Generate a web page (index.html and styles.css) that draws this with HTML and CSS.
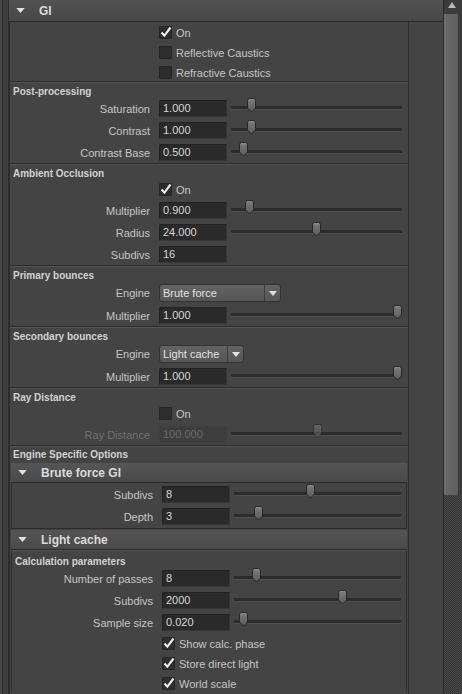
FILE: index.html
```html
<!DOCTYPE html>
<html>
<head>
<meta charset="utf-8">
<title>GI</title>
<link rel="stylesheet" href="styles.css">
</head>
<body>
<svg class="defs" width="0" height="0" aria-hidden="true">
  <defs>
    <linearGradient id="hg" x1="0" y1="0" x2="0" y2="1">
      <stop offset="0" stop-color="#7c7c7c"/>
      <stop offset="1" stop-color="#5c5c5c"/>
    </linearGradient>
    <symbol id="hdl" viewBox="0 0 11 15">
      <path d="M1.5 2.5 Q1.5 0.5 3.5 0.5 H7.5 Q9.5 0.5 9.5 2.5 V10 L5.5 14 L1.5 10 Z" fill="url(#hg)" stroke="#262626"/>
      <path d="M3 1.7 H8" stroke="#949494" stroke-width="0.8"/>
    </symbol>
    <symbol id="tick" viewBox="0 0 14 14">
      <path d="M2.5 7.5 L5.4 10.6 L11.5 2.5" fill="none" stroke="#ededed" stroke-width="2.1"/>
    </symbol>
    <symbol id="down" viewBox="0 0 10 6">
      <path d="M0 0 H10 L5 6 Z" fill="#e2e2e2"/>
    </symbol>
    <symbol id="up" viewBox="0 0 8 6">
      <path d="M0 6 H8 L4 0 Z" fill="#b8b8b8"/>
    </symbol>
  </defs>
</svg>

<div class="app">
  <div class="gutter"></div>

  <div class="main">
    <div class="hdr"><svg class="tri"><use href="#down"/></svg><span>GI</span></div>

    <div class="frame">
      <!-- On / caustics -->
      <div class="sec first">
        <div class="rows">
          <div class="crow"><span class="cb"><svg><use href="#tick"/></svg></span><span>On</span></div>
          <div class="crow"><span class="cb"></span><span>Reflective Caustics</span></div>
          <div class="crow"><span class="cb"></span><span>Refractive Caustics</span></div>
        </div>
      </div>

      <!-- Post-processing -->
      <div class="sec">
        <div class="ttl">Post-processing</div>
        <div class="rows">
          <div class="row"><span class="lbl">Saturation</span><span class="fld">1.000</span><span class="sld"><svg class="hd" style="left:15px"><use href="#hdl"/></svg></span></div>
          <div class="row"><span class="lbl">Contrast</span><span class="fld">1.000</span><span class="sld"><svg class="hd" style="left:15px"><use href="#hdl"/></svg></span></div>
          <div class="row"><span class="lbl">Contrast Base</span><span class="fld">0.500</span><span class="sld"><svg class="hd" style="left:7px"><use href="#hdl"/></svg></span></div>
        </div>
      </div>

      <!-- Ambient Occlusion -->
      <div class="sec">
        <div class="ttl">Ambient Occlusion</div>
        <div class="rows">
          <div class="crow"><span class="cb"><svg><use href="#tick"/></svg></span><span>On</span></div>
          <div class="row"><span class="lbl">Multiplier</span><span class="fld">0.900</span><span class="sld"><svg class="hd" style="left:13px"><use href="#hdl"/></svg></span></div>
          <div class="row"><span class="lbl">Radius</span><span class="fld">24.000</span><span class="sld"><svg class="hd" style="left:80px"><use href="#hdl"/></svg></span></div>
          <div class="row"><span class="lbl">Subdivs</span><span class="fld">16</span></div>
        </div>
      </div>

      <!-- Primary bounces -->
      <div class="sec">
        <div class="ttl">Primary bounces</div>
        <div class="rows">
          <div class="row dd"><span class="lbl">Engine</span><span class="ddbox wide"><span class="t">Brute force</span><span class="a"><svg><use href="#down"/></svg></span></span></div>
          <div class="row"><span class="lbl">Multiplier</span><span class="fld">1.000</span><span class="sld"><svg class="hd" style="left:161px"><use href="#hdl"/></svg></span></div>
        </div>
      </div>

      <!-- Secondary bounces -->
      <div class="sec">
        <div class="ttl">Secondary bounces</div>
        <div class="rows">
          <div class="row dd"><span class="lbl">Engine</span><span class="ddbox narrow"><span class="t">Light cache</span><span class="a"><svg><use href="#down"/></svg></span></span></div>
          <div class="row"><span class="lbl">Multiplier</span><span class="fld">1.000</span><span class="sld"><svg class="hd" style="left:161px"><use href="#hdl"/></svg></span></div>
        </div>
      </div>

      <!-- Ray Distance -->
      <div class="sec">
        <div class="ttl">Ray Distance</div>
        <div class="rows">
          <div class="crow"><span class="cb"></span><span>On</span></div>
          <div class="row dis"><span class="lbl">Ray Distance</span><span class="fld">100.000</span><span class="sld"><svg class="hd" style="left:81px"><use href="#hdl"/></svg></span></div>
        </div>
      </div>

      <!-- Engine Specific Options -->
      <div class="sec last">
        <div class="ttl short">Engine Specific Options</div>

        <div class="subhdr"><svg class="tri"><use href="#down"/></svg><span>Brute force GI</span></div>
        <div class="subfrm one">
          <div class="rows">
            <div class="row"><span class="lbl">Subdivs</span><span class="fld">8</span><span class="sld"><svg class="hd" style="left:71px"><use href="#hdl"/></svg></span></div>
            <div class="row"><span class="lbl">Depth</span><span class="fld">3</span><span class="sld"><svg class="hd" style="left:19px"><use href="#hdl"/></svg></span></div>
          </div>
        </div>

        <div class="subhdr second"><svg class="tri"><use href="#down"/></svg><span>Light cache</span></div>
        <div class="subfrm two">
          <div class="ttl">Calculation parameters</div>
          <div class="rows">
            <div class="row"><span class="lbl">Number of passes</span><span class="fld">8</span><span class="sld"><svg class="hd" style="left:17px"><use href="#hdl"/></svg></span></div>
            <div class="row"><span class="lbl">Subdivs</span><span class="fld">2000</span><span class="sld"><svg class="hd" style="left:103px"><use href="#hdl"/></svg></span></div>
            <div class="row"><span class="lbl">Sample size</span><span class="fld">0.020</span><span class="sld"><svg class="hd" style="left:4px"><use href="#hdl"/></svg></span></div>
            <div class="crow"><span class="cb"><svg><use href="#tick"/></svg></span><span>Show calc. phase</span></div>
            <div class="crow"><span class="cb"><svg><use href="#tick"/></svg></span><span>Store direct light</span></div>
            <div class="crow"><span class="cb"><svg><use href="#tick"/></svg></span><span>World scale</span></div>
          </div>
        </div>
      </div>
    </div>
  </div>

  <div class="scroll">
    <div class="sb-top"><svg><use href="#up"/></svg></div>
    <div class="thumb"></div>
    <div class="hatch"></div>
  </div>
</div>
</body>
</html>
```

FILE: styles.css
```css
* { box-sizing: border-box; }

html, body { margin: 0; padding: 0; }

body {
  background: #444444;
  font-family: "Liberation Sans", Arial, sans-serif;
  font-size: 11px;
  color: #c6c6c6;
  width: 462px;
  height: 694px;
  overflow: hidden;
}

.defs { position: absolute; width: 0; height: 0; }

.app { display: flex; height: 694px; }

.gutter {
  flex: none;
  width: 9px;
  background: linear-gradient(to right, #474747 0 2px, #2c2c2c 2px 3px, #3f3f3f 3px 8px, #2c2c2c 8px 9px);
}

.main {
  flex: none;
  width: 434px;
  display: flex;
  flex-direction: column;
  overflow: hidden;
}

.hdr {
  flex: none;
  height: 22px;
  display: flex;
  align-items: center;
  background: linear-gradient(#525252, #484848);
  border-bottom: 1px solid #2c2c2c;
  font-weight: bold;
  font-size: 12px;
  color: #dcdcdc;
}

.tri { flex: none; width: 9px; height: 5px; margin-left: 7px; margin-right: 14px; }

.frame {
  flex: 1;
  width: 400px;
  border-left: 1px solid #2e2e2e;
  border-right: 1px solid #2e2e2e;
}

.sec { padding-bottom: 2px; border-bottom: 1px solid #2d2d2d; }
.sec + .sec { border-top: 1px solid #545454; }
.sec.first { padding-top: 3px; padding-bottom: 1px; }
.sec.last { border-bottom: none; padding-bottom: 0; }

.ttl {
  height: 17px;
  line-height: 17px;
  padding-left: 3px;
  font-weight: bold;
  font-size: 10px;
  color: #d2d2d2;
  white-space: nowrap;
}
.ttl.short { height: 16px; line-height: 16px; }

.rows { display: flex; flex-direction: column; gap: 5px; }

.row { display: flex; align-items: center; height: 17px; }
.row.dd { height: 18px; }

.lbl {
  flex: none;
  width: 140px;
  margin-right: 9px;
  text-align: right;
  white-space: nowrap;
}

.fld {
  flex: none;
  width: 68px;
  height: 17px;
  line-height: 17px;
  padding-left: 4px;
  background: #2a2a2a;
  border-radius: 2px;
  color: #d8d8d8;
  box-shadow: inset 1px 1px 0 #222222, inset -1px -1px 0 #363636;
}

.sld {
  flex: none;
  position: relative;
  width: 171px;
  height: 17px;
  margin-left: 4px;
}
.sld::before {
  content: "";
  position: absolute;
  left: 0;
  right: 0;
  top: 6px;
  height: 3px;
  background: #2c2c2c;
  border-radius: 1px;
  box-shadow: 0 1px 0 #4f4f4f;
}
.hd { position: absolute; top: -2px; width: 11px; height: 15px; }

.crow { display: flex; align-items: center; height: 15px; padding-left: 149px; white-space: nowrap; }
.cb {
  flex: none;
  position: relative;
  width: 13px;
  height: 13px;
  margin-right: 4px;
  background: #2d2d2d;
  border: 1px solid #262626;
  border-radius: 1px;
}
.cb svg { position: absolute; left: -1px; top: -2px; width: 14px; height: 14px; }

.ddbox {
  flex: none;
  display: flex;
  height: 18px;
  border: 1px solid #333333;
  border-radius: 3px;
  background: linear-gradient(#636363, #565656);
  color: #e2e2e2;
}
.ddbox.wide { width: 122px; }
.ddbox.narrow { width: 85px; }
.ddbox .t { flex: 1; padding-left: 3px; line-height: 16px; white-space: nowrap; }
.ddbox .a {
  flex: none;
  width: 16px;
  border-left: 1px solid #3c3c3c;
  display: flex;
  align-items: center;
  justify-content: center;
}
.ddbox .a svg { width: 8px; height: 5px; }

.dis .lbl { color: #707070; }
.dis .fld { background: #3e3e3e; color: #6a6a6a; box-shadow: inset 0 0 0 1px #404040; }
.dis .hd { opacity: 0.55; }

.subhdr {
  height: 20px;
  margin: 0 1px;
  display: flex;
  align-items: center;
  background: linear-gradient(#555555, #4a4a4a);
  border-bottom: 1px solid #2b2b2b;
  font-weight: bold;
  font-size: 12px;
  color: #dadada;
}
.subhdr.second { margin-top: 1px; }

.subfrm {
  margin: 0 1px;
  border-left: 1px solid #2e2e2e;
  border-right: 1px solid #2e2e2e;
}
.subfrm.one { padding: 3px 0; border-bottom: 1px solid #2b2b2b; }
.subfrm.two { padding-top: 2px; border-top: 1px solid #545454; }
.subfrm .lbl { width: 141px; }
.subfrm .sld { width: 167px; }
.subfrm .crow { padding-left: 150px; }

.scroll {
  flex: none;
  width: 19px;
  border-left: 1px solid #2a2a2a;
  display: flex;
  flex-direction: column;
  background: #3b3b3b;
}
.sb-top { flex: none; height: 14px; padding: 2px 0 0 4px; }
.sb-top svg { display: block; width: 8px; height: 6px; }
.thumb {
  flex: none;
  height: 481px;
  width: 15px;
  background: linear-gradient(to right, #717171, #666666 3px, #606060);
  border-right: 1px solid #3a3a3a;
}
.hatch {
  flex: 1;
  background: repeating-conic-gradient(#4a4a4a 0 25%, #343434 0 50%) 0 0 / 2px 2px;
}
```
